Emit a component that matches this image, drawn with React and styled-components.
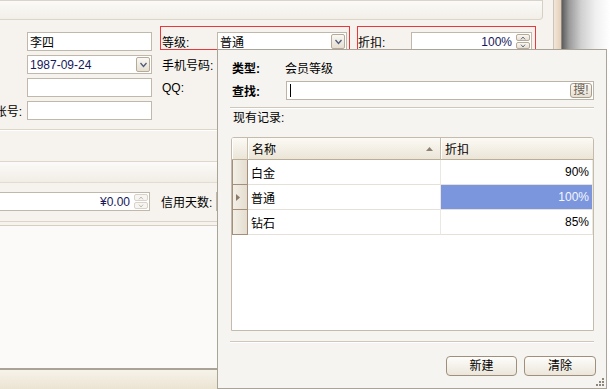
import React from 'react';
import styled, { createGlobalStyle } from 'styled-components';

const FONT = `"Liberation Sans", "Noto Sans CJK SC", sans-serif`;

const Global = createGlobalStyle`
  html, body { margin: 0; padding: 0; background: #fff; }
  body { font-family: ${FONT}; font-size: 12px; color: #000; }
  * { box-sizing: border-box; }
`;

const Screen = styled.div`
  position: relative;
  width: 610px;
  height: 389px;
  overflow: hidden;
  display: flex;
  background: #fff;
`;

const Window = styled.div`
  width: 553px;
  flex: none;
  display: flex;
  flex-direction: column;
  background: #f6f3ee;
`;

const Frame = styled.div`
  width: 9px;
  flex: none;
  border-left: 1px solid #cdc5b9;
  border-right: 1px solid #8e8881;
  background: linear-gradient(to right, #f1e6d9, #e4cfb8);
`;

const Shadow = styled.div`
  flex: 1;
  background: linear-gradient(to right, #5c5c5c 0%, #9a9a9a 15%, #d0d0d0 40%, #f0f0f0 70%, #fff 100%);
`;

const TopStrip = styled.div`
  height: 20px;
  flex: none;
  margin-right: 10px;
  border-top: 1px solid #d9d3c9;
  border-bottom: 1px solid #dcd5ca;
  border-right: 1px solid #d6cfc4;
  border-bottom-right-radius: 4px;
  background: linear-gradient(#fbfaf8, #f2efe9);
`;

const Form = styled.div`
  display: grid;
  grid-template-columns: 27px 125px 8px 57px 130px 10px 54px 121px;
  grid-template-rows: repeat(4, 19px);
  row-gap: 4px;
  padding-top: 12px;
  align-items: center;
`;

const SideLabel = styled.div`
  grid-column: 1;
  display: flex;
  justify-content: flex-end;
  overflow: hidden;
  white-space: nowrap;
  padding-right: 5px;
`;

const MidLabel = styled.div`
  grid-column: 4;
  padding-left: 2px;
  white-space: nowrap;
`;

const Group = styled.div`
  grid-column: ${(p) => p.$col};
  position: relative;
  display: flex;
  align-items: center;
  height: 19px;
  &::before {
    content: '';
    position: absolute;
    top: -6px;
    left: 0;
    right: ${(p) => p.$right}px;
    bottom: 1px;
    border: 1px solid #e8383c;
    pointer-events: none;
  }
`;

const GroupLabel = styled.div`
  width: ${(p) => p.$w}px;
  flex: none;
  padding-left: ${(p) => p.$pad}px;
  white-space: nowrap;
`;

const Box = styled.div`
  grid-column: ${(p) => p.$col || 'auto'};
  width: ${(p) => (p.$w ? `${p.$w}px` : 'auto')};
  height: 19px;
  flex: none;
  border: 1px solid #c1b8ac;
  background: #fff;
  display: flex;
  align-items: center;
  padding: 0 1px 0 2px;
  white-space: nowrap;
  color: ${(p) => (p.$num ? '#16185a' : '#000')};
  margin-left: ${(p) => p.$ml || 0}px;
`;

const BoxText = styled.span`
  flex: ${(p) => (p.$grow ? 1 : 'none')};
  text-align: ${(p) => (p.$right ? 'right' : 'left')};
  padding-right: ${(p) => p.$pr || 0}px;
`;

const DropBtn = styled.div`
  width: 14px;
  height: 15px;
  flex: none;
  border: 1px solid #b6ab9a;
  border-radius: 2px;
  background: linear-gradient(#faf8f3, #e6dfd1);
  display: flex;
  align-items: center;
  justify-content: center;
`;

const Spin = styled.div`
  width: 14px;
  height: 15px;
  flex: none;
  display: flex;
  flex-direction: column;
  gap: 1px;
`;

const SpinHalf = styled.div`
  flex: 1;
  border: 1px solid ${(p) => (p.$dim ? '#d8d2c9' : '#b6ab9a')};
  border-radius: 2px;
  background: ${(p) => (p.$dim ? '#f7f5f1' : 'linear-gradient(#faf8f3, #e6dfd1)')};
  display: flex;
  align-items: center;
  justify-content: center;
`;

const Divider = styled.div`
  height: 2px;
  flex: none;
  margin-top: ${(p) => p.$mt || 0}px;
  margin-left: ${(p) => p.$ml || 0}px;
  border-top: 1px solid ${(p) => p.$c || '#dcd5ca'};
  border-bottom: 1px solid #fff;
`;

const Blank = styled.div`
  height: ${(p) => p.$h}px;
  flex: none;
`;

const Band = styled.div`
  height: 22px;
  flex: none;
  border-top: 1px solid #ddd7cc;
  border-bottom: 1px solid #e2dcd1;
  background: linear-gradient(#fcfbf9, #f1ede6);
`;

const MoneyRow = styled.div`
  display: flex;
  align-items: center;
  height: 19px;
  margin-top: 9px;
  flex: none;
`;

const RowLabel = styled.div`
  width: 55px;
  margin-left: 11px;
  flex: none;
  white-space: nowrap;
`;

const ListArea = styled.div`
  flex: 1;
  margin-top: 10px;
  border-top: 1px solid #dcd4c8;
  padding-top: 3px;
  display: flex;
  flex-direction: column;
`;

const ListBody = styled.div`
  flex: 1;
  border-top: 1px solid #d6cec2;
  background: #fbfaf8;
`;

const StatusBar = styled.div`
  height: 21px;
  flex: none;
  border-top: 2px solid #aaa197;
  background: linear-gradient(#f6f3ea, #ebe4d3);
`;

/* ---------- popup ---------- */

const Popup = styled.div`
  position: absolute;
  left: 217px;
  top: 49px;
  width: 390px;
  height: 340px;
  border: 1px solid #a9a398;
  background: #f6f4f0;
  padding: 8px 12px 0 13px;
  display: flex;
  flex-direction: column;
`;

const PopRow = styled.div`
  display: flex;
  align-items: center;
  height: ${(p) => p.$h}px;
  margin-top: ${(p) => p.$mt || 0}px;
  flex: none;
`;

const BoldLabel = styled.div`
  width: ${(p) => p.$w}px;
  margin-left: 1px;
  flex: none;
  font-weight: 700;
  white-space: nowrap;
`;

const SearchBox = styled.div`
  flex: 1;
  height: 19px;
  border: 1px solid #bdb4a8;
  background: #fff;
  display: flex;
  align-items: center;
  padding-left: 3px;
`;

const Caret = styled.span`
  width: 1px;
  height: 13px;
  background: #000;
`;

const SearchBtn = styled.div`
  margin-left: auto;
  margin-right: 1px;
  width: 22px;
  height: 15px;
  border: 1px solid #a99d8b;
  border-radius: 3px;
  background: linear-gradient(#fbfaf6, #e6dfd2);
  color: #6c6255;
  font-size: 12px;
  line-height: 13px;
  text-align: center;
  white-space: nowrap;
`;

const RecordsLabel = styled.div`
  margin-top: 1px;
  padding-left: 2px;
  line-height: 16px;
  flex: none;
`;

const GridBox = styled.div`
  margin-top: 11px;
  width: 363px;
  height: 194px;
  flex: none;
  border: 1px solid #c5bbad;
  border-radius: 3px 3px 0 0;
  background: #fff;
  overflow: hidden;
`;

const GridRow = styled.div`
  display: grid;
  grid-template-columns: 16px 193px 1fr;
  height: ${(p) => p.$h}px;
`;

const HeadCell = styled.div`
  background: linear-gradient(#fcfaf5, #ebe5d7);
  border-right: 1px solid #c9bda9;
  border-bottom: 1px solid #bbae98;
  box-shadow: inset 1px 0 0 #fff;
  display: flex;
  align-items: center;
  justify-content: space-between;
  padding: 0 7px 0 4px;
  white-space: nowrap;
  &:last-child { border-right: none; }
`;

const RowHead = styled.div`
  background: linear-gradient(to right, #f5f1e9, #e4ddcf);
  border-right: 1px solid #a38f7a;
  border-bottom: 1px solid #a38f7a;
  box-shadow: inset 1px 0 0 #a38f7a;
  display: flex;
  align-items: center;
  padding-left: 4px;
`;

const Cell = styled.div`
  border-right: 1px solid #ece8e1;
  border-bottom: 1px solid #e6e1d8;
  display: flex;
  align-items: center;
  justify-content: ${(p) => (p.$right ? 'flex-end' : 'flex-start')};
  padding: 0 3px;
  background: ${(p) => (p.$sel ? '#7b96dd' : '#fff')};
  color: ${(p) => (p.$sel ? '#f4f6ff' : '#000')};
  white-space: nowrap;
`;

const ButtonRow = styled.div`
  margin-top: 13px;
  margin-right: -2px;
  display: flex;
  justify-content: flex-end;
  gap: 7px;
  flex: none;
`;

const Button = styled.button`
  width: ${(p) => p.$w}px;
  height: 20px;
  border: 1px solid #9e907b;
  border-radius: 4px;
  background: linear-gradient(#fefdfb, #ebe6db);
  font-family: ${FONT};
  font-size: 12px;
  color: #000;
  padding: 0;
  line-height: 18px;
`;

const Grip = styled.svg`
  position: absolute;
  right: 2px;
  bottom: 2px;
`;

/* ---------- icons ---------- */

const Chevron = ({ up, dim, w = 9, h = 6 }) => (
  <svg width={w} height={h} viewBox="0 0 9 6">
    <polyline
      points={up ? '1.5,5 4.5,1.5 7.5,5' : '1.5,1 4.5,4.5 7.5,1'}
      fill="none"
      stroke={dim ? '#b5b0a8' : '#4d5c7c'}
      strokeWidth="1.3"
    />
  </svg>
);

const Spinner = ({ dim }) => (
  <Spin>
    <SpinHalf $dim={dim}>
      <Chevron up dim={dim} w={6} h={4} />
    </SpinHalf>
    <SpinHalf $dim={dim}>
      <Chevron dim={dim} w={6} h={4} />
    </SpinHalf>
  </Spin>
);

const rows = [
  { name: '白金', rate: '90%' },
  { name: '普通', rate: '100%', current: true },
  { name: '钻石', rate: '85%' },
];

export default function App() {
  return (
    <>
      <Global />
      <Screen>
        <Window>
          <TopStrip />
          <Form>
            <Box $col={2}>李四</Box>
            <Group $col="4 / 6" $right={-3}>
              <GroupLabel $w={57} $pad={2}>等级:</GroupLabel>
              <Box $w={130}>
                <BoxText $grow>普通</BoxText>
                <DropBtn>
                  <Chevron />
                </DropBtn>
              </Box>
            </Group>
            <Group $col="7 / 9" $right={-4}>
              <GroupLabel $w={54} $pad={1}>折扣:</GroupLabel>
              <Box $w={121} $num>
                <BoxText $grow $right $pr={4}>100%</BoxText>
                <Spinner />
              </Box>
            </Group>

            <Box $col={2} $num>
              <BoxText $grow>1987-09-24</BoxText>
              <DropBtn>
                <Chevron />
              </DropBtn>
            </Box>
            <MidLabel>手机号码:</MidLabel>

            <Box $col={2} />
            <MidLabel>QQ:</MidLabel>

            <SideLabel>账号:</SideLabel>
            <Box $col={2} />
          </Form>
          <Divider $mt={9} />
          <Blank $h={30} />
          <Band />
          <MoneyRow>
            <Box $w={160} $ml={-10} $num>
              <BoxText $grow $right $pr={4}>¥0.00</BoxText>
              <Spinner dim />
            </Box>
            <RowLabel>信用天数:</RowLabel>
            <Box $w={120} />
          </MoneyRow>
          <ListArea>
            <ListBody />
          </ListArea>
          <StatusBar />
        </Window>
        <Frame />
        <Shadow />

        <Popup>
          <PopRow $h={18}>
            <BoldLabel $w={53}>类型:</BoldLabel>
            <span>会员等级</span>
          </PopRow>
          <PopRow $h={19} $mt={5}>
            <BoldLabel $w={54}>查找:</BoldLabel>
            <SearchBox>
              <Caret />
              <SearchBtn>搜!</SearchBtn>
            </SearchBox>
          </PopRow>
          <Divider $mt={7} $ml={-1} $c="#cfc7b9" />
          <RecordsLabel>现有记录:</RecordsLabel>
          <GridBox>
            <GridRow $h={22}>
              <HeadCell />
              <HeadCell>
                <span>名称</span>
                <svg width="7" height="4" viewBox="0 0 7 4">
                  <polygon points="0,4 3.5,0 7,4" fill="#8c8172" />
                </svg>
              </HeadCell>
              <HeadCell>折扣</HeadCell>
            </GridRow>
            {rows.map((r) => (
              <GridRow $h={25} key={r.name}>
                <RowHead>
                  {r.current && (
                    <svg width="4" height="7" viewBox="0 0 4 7">
                      <polygon points="0,0 4,3.5 0,7" fill="#8a7a6a" />
                    </svg>
                  )}
                </RowHead>
                <Cell>{r.name}</Cell>
                <Cell $right $sel={r.current}>
                  {r.rate}
                </Cell>
              </GridRow>
            ))}
          </GridBox>
          <Divider $mt={10} $ml={-1} $c="#cfc7b9" />
          <ButtonRow>
            <Button $w={71}>新建</Button>
            <Button $w={72}>清除</Button>
          </ButtonRow>
          <Grip width="9" height="9" viewBox="0 0 9 9">
            {[
              [7, 1],
              [7, 4],
              [4, 4],
              [7, 7],
              [4, 7],
              [1, 7],
            ].map(([x, y]) => (
              <rect key={`${x}-${y}`} x={x} y={y} width="2" height="2" fill="#8e877c" />
            ))}
          </Grip>
        </Popup>
      </Screen>
    </>
  );
}
